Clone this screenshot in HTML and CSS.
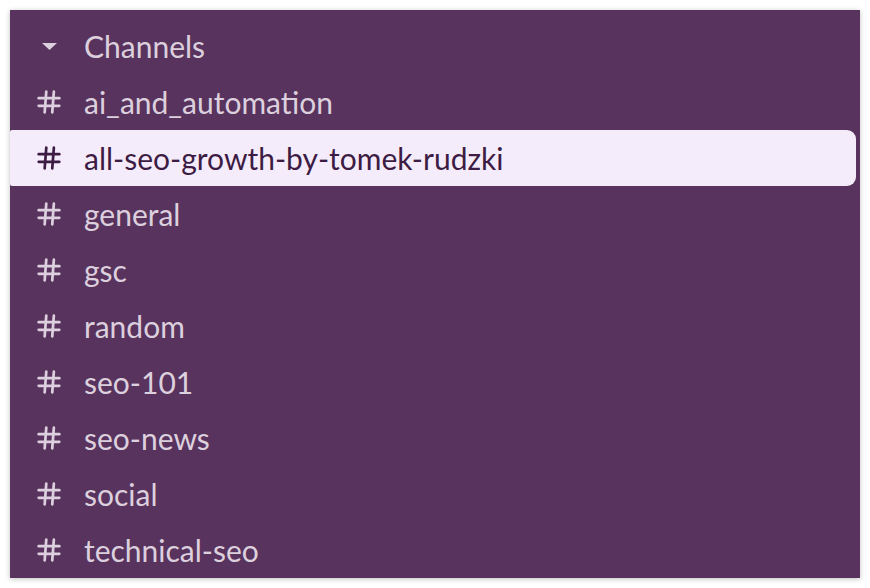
FILE: index.html
```html
<!DOCTYPE html>
<html lang="en">
<head>
  <meta charset="UTF-8">
  <title>Channels</title>
  <link rel="stylesheet" href="styles.css">
</head>
<body>

  <div class="sidebar">
    <div class="section-head">
      <span class="icon">
        <svg width="17" height="9" viewBox="0 0 17 9"><path d="M1 1 L16 1 L8.5 8 Z" fill="currentColor"/></svg>
      </span>
      <span class="label">Channels</span>
    </div>

    <ul class="channels">
      <li class="channel"><span class="icon hash"></span><span class="label">ai_and_automation</span></li>
      <li class="channel active"><span class="icon hash"></span><span class="label">all-seo-growth-by-tomek-rudzki</span></li>
      <li class="channel"><span class="icon hash"></span><span class="label">general</span></li>
      <li class="channel"><span class="icon hash"></span><span class="label">gsc</span></li>
      <li class="channel"><span class="icon hash"></span><span class="label">random</span></li>
      <li class="channel"><span class="icon hash"></span><span class="label">seo-101</span></li>
      <li class="channel"><span class="icon hash"></span><span class="label">seo-news</span></li>
      <li class="channel"><span class="icon hash"></span><span class="label">social</span></li>
      <li class="channel"><span class="icon hash"></span><span class="label">technical-seo</span></li>
    </ul>
  </div>

  <script>
    // same hash glyph for every channel row
    const hashSvg = '<svg width="26" height="26" viewBox="0 0 24 24" fill="none" stroke="currentColor" stroke-width="2.5" stroke-linecap="round">' +
      '<path d="M9.5 2.5 L8 21.5"/><path d="M16.5 2.5 L15 21.5"/>' +
      '<path d="M2.5 8.5 L21.5 8.5"/><path d="M2.5 15.5 L21.5 15.5"/></svg>';
    document.querySelectorAll('.hash').forEach(el => el.innerHTML = hashSvg);
  </script>

</body>
</html>
```

FILE: styles.css
```css
* {
  box-sizing: border-box;
}

body {
  margin: 0;
  padding: 10px;
  background: #ffffff;
  font-family: "Lato", "Liberation Sans", sans-serif;
}

.sidebar {
  width: 850px;
  height: 568px;
  padding-top: 8px;
  background: #58335d;
  color: #ddd0de;
  box-shadow: 0 1px 5px rgba(0, 0, 0, 0.25);
  overflow: hidden;
}

.section-head,
.channel {
  display: flex;
  align-items: center;
  height: 56px;
  font-size: 30px;
}

.channels {
  list-style: none;
  margin: 0;
  padding: 0;
}

.icon {
  width: 74px;
  padding-left: 26px;
  display: flex;
  align-items: center;
}

.section-head .icon {
  padding-left: 31px;
}

.channel.active {
  width: 846px;
  background: #f5ecfb;
  color: #3d1c44;
  border-radius: 2px 9px 9px 2px;
}
```
